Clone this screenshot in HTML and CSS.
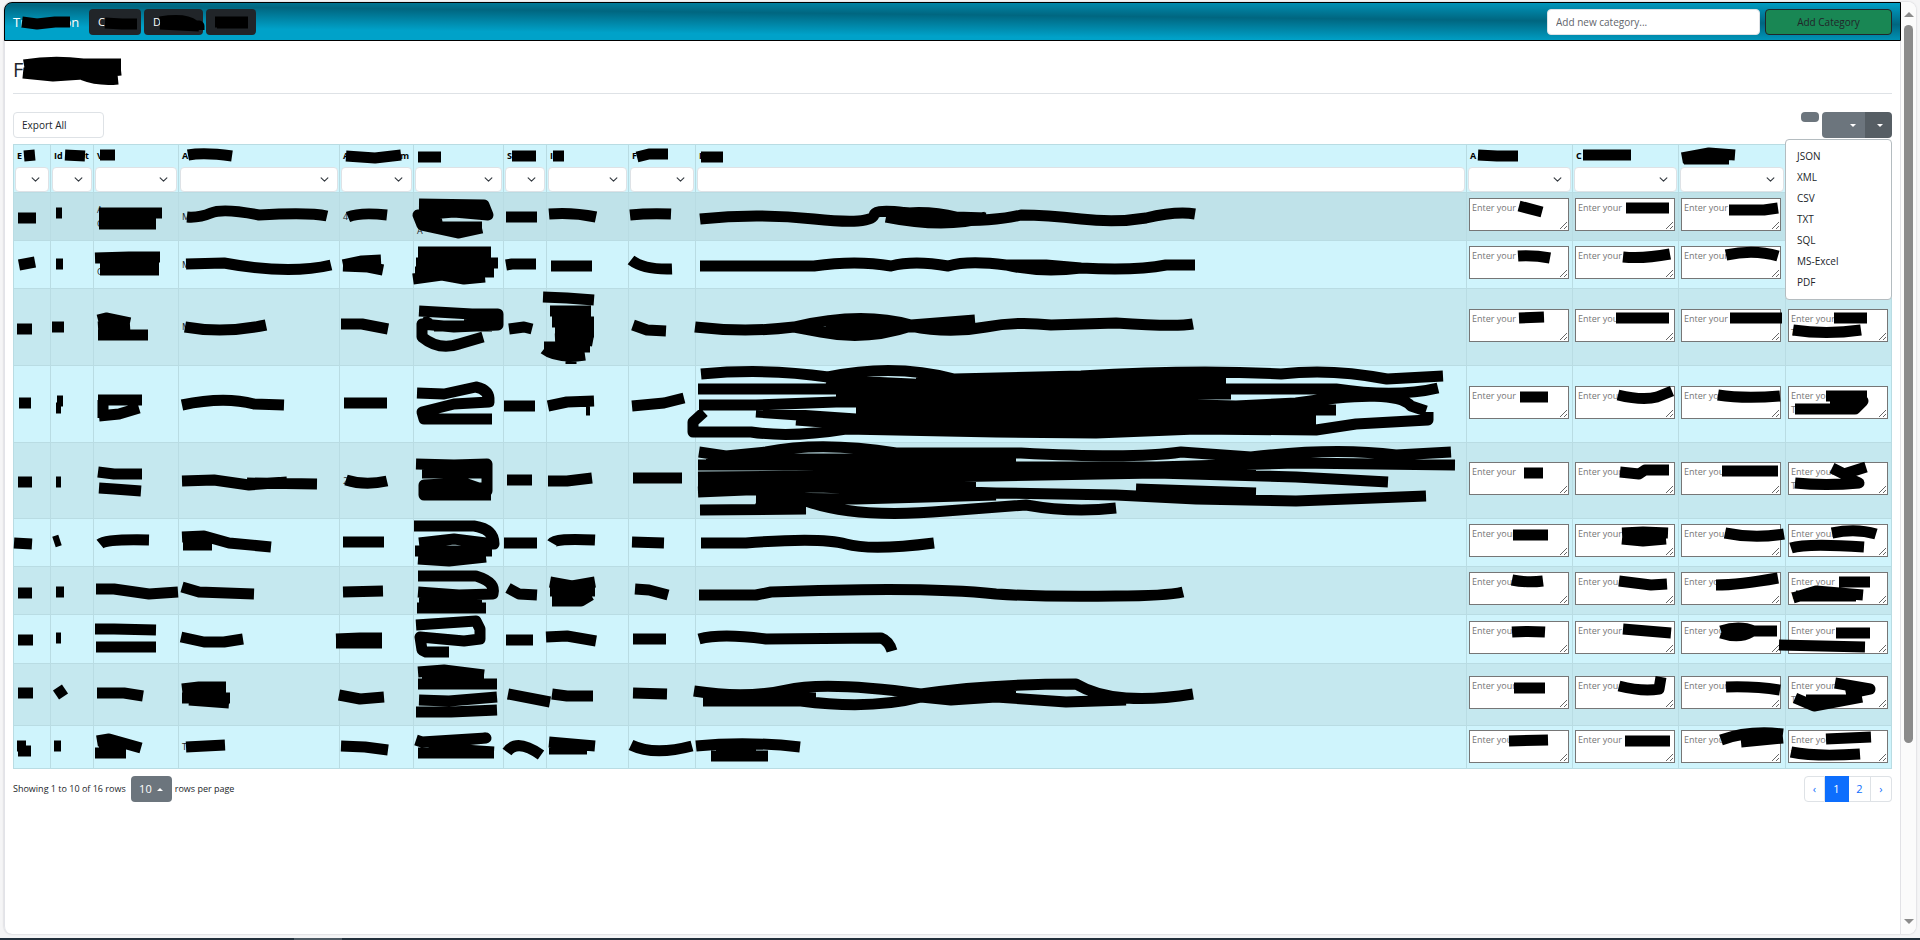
FILE: index.html
```html
<!DOCTYPE html>
<html lang="en">
<head>
<meta charset="utf-8">
<title>Categories</title>
<link rel="stylesheet" href="styles.css">
</head>
<body>
<div class="window">
  <div class="page">
    <header class="navbar">
      <a class="brand" href="#">Tr<span class="redacted redacted-brand"><svg class="ink"><path d="M-3 10L12 12L30 10H45"/></svg></span>on</a>
      <nav class="nav-buttons">
        <button class="btn btn-dark nav-c" type="button">C<svg class="ink"><path d="M15 13L32 14H47"/></svg></button>
        <button class="btn btn-dark nav-d" type="button">D<svg class="ink"><path d="M15 12Q40 8 49 15M15 14L54 16V20"/></svg></button>
        <button class="btn btn-dark nav-t" type="button" aria-label="Menu"><svg class="ink"><path d="M8 12H41M10 13H41"/></svg></button>
      </nav>
      <form class="add-form">
        <input class="field" type="text" placeholder="Add new category..." aria-label="New category">
        <button class="btn btn-success" type="button">Add Category</button>
      </form>
    </header>
    <main class="content">
      <h1 class="title">F<svg class="ink"><path d="M11 6Q40 1 70 5H108M10 14L40 17L70 15L108 11M12 11H108M70 16Q85 22 105 20"/></svg></h1>
      <div class="toolbar">
        <select class="field export-scope" aria-label="Export scope"><option>Export All</option></select>
        <div class="tools">
          <button class="pill" type="button" aria-label="Toggle view"></button>
          <div class="btn-group">
            <button class="btn btn-secondary columns" type="button" aria-label="Columns"><span class="caret"></span></button>
            <button class="btn btn-secondary export" type="button" aria-label="Export" aria-expanded="true"><span class="caret"></span></button>
            <div class="menu">
              <a href="#">JSON</a><a href="#">XML</a><a href="#">CSV</a><a href="#">TXT</a><a href="#">SQL</a><a href="#">MS-Excel</a><a href="#">PDF</a>
            </div>
          </div>
        </div>
      </div>
      <table class="grid">
        <colgroup>
          <col class="w37"><col class="w43"><col class="w85"><col class="w161"><col class="w74"><col class="w90"><col class="w43"><col class="w82"><col class="w67"><col><col class="w106"><col class="w106"><col class="w107"><col class="w106">
        </colgroup>
        <thead><tr id="head"></tr></thead>
        <tbody id="rows"></tbody>
      </table>
      <footer class="footer">
        <div class="info">
          <span>Showing 1 to 10 of 16 rows</span>
          <button class="btn btn-secondary size" type="button">10<span class="caret caret-up"></span></button>
          <span>rows per page</span>
        </div>
        <nav class="pages" aria-label="Pages">
          <a class="step" href="#">‹</a><a class="active" href="#">1</a><a href="#">2</a><a class="step" href="#">›</a>
        </nav>
      </footer>
    </main>
  </div>
  <div class="scrollbar">
    <span class="arrow arrow-up"></span>
    <div class="track"><div class="thumb"></div></div>
    <span class="arrow arrow-down"></span>
  </div>
</div>
<div class="taskbar"><span></span></div>
<script src="table.js"></script>
</body>
</html>
```
FILE: styles.css
```css
* { box-sizing: border-box; }
body {
  margin: 0;
  height: 100vh;
  display: flex;
  flex-direction: column;
  background: #f5f5f6;
  color: #212529;
  font: 10px/16px "Open Sans", "Noto Sans", sans-serif;
  overflow: hidden;
}
button, input, select, textarea { font: inherit; color: inherit; margin: 0; }
a { text-decoration: none; color: inherit; }

.window {
  flex: 1;
  display: flex;
  margin: 2px 4px 4px;
  background: #fff;
  border-radius: 8px;
  box-shadow: 0 0 2px #b9bbc0;
}
.page {
  flex: 1;
  min-width: 0;
  border-left: 1px solid #e2e3e8;
  border-right: 1px solid #e2e2e6;
  border-radius: 8px 0 0 8px;
}
.ink {
  position: absolute;
  top: 0;
  left: 0;
  z-index: 1;
  width: 1px;
  height: 1px;
  overflow: visible;
  pointer-events: none;
}
.ink path { fill: none; stroke: #000; stroke-width: 11px; stroke-linejoin: round; }

.navbar {
  display: flex;
  align-items: center;
  height: 39px;
  margin: 0 -1px;
  padding: 0 8px;
  border: 1px solid #000;
  border-radius: 8px 0 0 0;
  background: linear-gradient(180.6deg, #009fc7 0%, #006680 38%, #00a2c9 76%, #00a2c9 100%);
}
.brand { color: #fff; font-size: 13px; line-height: 20px; width: 76px; white-space: nowrap; }
.redacted { position: relative; display: inline-block; height: 20px; vertical-align: top; }
.redacted-brand { width: 38px; }
.nav-buttons { display: flex; gap: 3px; }
.btn {
  position: relative;
  height: 26px;
  padding: 0 8px;
  border: 1px solid transparent;
  border-radius: 4px;
  text-align: left;
}
.btn-dark { background: #212529; color: #fff; font-size: 11px; }
.nav-c { width: 52px; }
.nav-d { width: 59px; }
.nav-t { width: 50px; }
.add-form { display: flex; gap: 5px; margin-left: auto; }
.field {
  height: 26px;
  width: 213px;
  padding: 0 8px;
  border: 1px solid #dee2e6;
  border-radius: 4px;
  background: #fff;
}
.field::placeholder { color: #5f656b; opacity: 1; }
.btn-success { width: 127px; text-align: center; background: #198754; border-color: #212529; }

.content { padding: 0 8px; }
.title {
  position: relative;
  margin: 0;
  padding: 16px 0 11px;
  border-bottom: 1px solid #dee2e6;
  font-size: 20px;
  line-height: 25px;
  font-weight: 400;
}
.title .ink { top: 18px; }
.toolbar { display: flex; justify-content: space-between; margin: 18px 0 6px; }
.export-scope { width: 91px; appearance: none; }
.tools { display: flex; align-items: flex-start; gap: 3px; }
.pill { width: 18px; height: 10px; padding: 0; border: 0; border-radius: 4px; background: #6c757d; }
.btn-group { position: relative; display: flex; }
.btn-secondary {
  display: flex;
  align-items: center;
  justify-content: flex-end;
  gap: 5px;
  background: #6c757d;
  color: #fff;
}
.columns { width: 43px; border-radius: 4px 0 0 4px; }
.export { width: 27px; border-radius: 0 4px 4px 0; background: #565e64; }
.caret { border: 3px solid transparent; border-top-color: #fff; border-bottom: 0; }
.caret-up { border-top: 0; border-bottom: 3px solid #fff; }
.menu {
  position: absolute;
  top: 27px;
  right: 0;
  z-index: 5;
  width: 107px;
  padding: 6px 0;
  border: 1px solid #b4bcc0;
  border-radius: 4px;
  background: #fff;
}
.menu a { display: block; padding: 0 11px; line-height: 21px; }

.grid {
  width: 100%;
  table-layout: fixed;
  border-collapse: collapse;
  font-size: 9px;
  line-height: 14px;
}
.w37 { width: 37px; }
.w43 { width: 43px; }
.w67 { width: 67px; }
.w74 { width: 74px; }
.w82 { width: 82px; }
.w85 { width: 85px; }
.w90 { width: 90px; }
.w106 { width: 106px; }
.w107 { width: 107px; }
.w161 { width: 161px; }
.grid th, .grid td {
  position: relative;
  padding: 0 3px;
  border: 1px solid #b9dce3;
  background: #cff4fc;
  text-align: left;
  white-space: pre-line;
}
.grid th { padding: 0 1px; color: #000; }
.grid tbody tr:nth-child(odd) td { background: #c5e8ef; }
.grid tbody tr:first-child td { background: #bfe2e9; }
.label { display: flex; height: 22px; padding: 0 10px 0 2px; justify-content: space-between; align-items: center; }
.label.spread { padding-right: 3px; }
.filter {
  display: block;
  width: 100%;
  height: 25px;
  border: 1px solid #dee2e6;
  border-radius: 4px;
  background-color: #fff;
}
select.filter {
  appearance: none;
  background-image: url("data:image/svg+xml,%3Csvg xmlns='http://www.w3.org/2000/svg' viewBox='0 0 16 16'%3E%3Cpath fill='none' stroke='%23343a40' stroke-linecap='round' stroke-linejoin='round' stroke-width='2' d='m2 5 6 6 6-6'/%3E%3C/svg%3E");
  background-repeat: no-repeat;
  background-position: right 8px center;
  background-size: 9px 9px;
}
.h43 { height: 43px; }
.h48 { height: 48px; }
.h49 { height: 49px; }
.h62 { height: 62px; }
.h76 { height: 76px; }
.h77 { height: 77px; }
.note {
  display: block;
  width: 100px;
  height: 33px;
  margin-bottom: 4px;
  padding: 2px;
  border: 1px solid #767676;
  border-radius: 0;
  background: #fff;
  overflow: hidden;
}
.h43 .note { margin-bottom: 2px; }
.grid .note-cell { padding: 0 2px; }

.footer { display: flex; justify-content: space-between; margin-top: 7px; }
.info { display: flex; align-items: center; font-size: 9px; }
.size { width: 41px; margin: 0 3px 0 5px; font-size: 11px; }
.pages { display: flex; color: #0d6efd; font-size: 11px; }
.pages a {
  width: 22px;
  height: 26px;
  border: 1px solid #dee2e6;
  border-left-width: 0;
  line-height: 24px;
  text-align: center;
}
.pages .step { width: 21px; }
.pages a:first-child { border-left-width: 1px; border-radius: 4px 0 0 4px; }
.pages a:last-child { border-radius: 0 4px 4px 0; }
.pages .active { width: 24px; background: #0d6efd; border-color: #0d6efd; color: #fff; }

.scrollbar {
  width: 15px;
  display: flex;
  flex-direction: column;
  align-items: center;
  padding: 10px 0;
  background: #fbfbfb;
  border-radius: 0 8px 8px 0;
}
.arrow { border: 5px solid transparent; }
.arrow-up { border-top: 0; border-bottom-color: #8b8b8b; }
.arrow-down { border-bottom: 0; border-top-color: #8b8b8b; }
.track { flex: 1; padding: 8px 0; }
.thumb { width: 9px; height: 81%; border-radius: 5px; background: #8b8b8b; }
.taskbar { height: 2px; padding-left: 294px; background: #22303c; }
.taskbar span { display: block; width: 48px; height: 2px; background: #4d5a64; }
```
FILE: table.js
```javascript
// Header cells: visible text (start, end) and the marker strokes over the rest.
const head = [
  ["E", "", "M10 11L21 10"],
  ["Id", "t", "M14 10L34 11"],
  ["V", "", "M6 10h15"],
  ["A", "", "M9 10Q25 7 53 11"],
  ["A", "m", "M6 11L35 13L61 10"],
  ["", "", "M4 12h23"],
  ["S", "", "M8 11h24"],
  ["I", "", "M6 11h11"],
  ["F", "", "M8 12L20 9H39"],
  ["I", "", "M5 12h22"],
  ["A", "", "M11 10L30 11H51"],
  ["C", "", "M10 10h48"],
  ["", "", "M3 13L30 8L56 10M5 14H50"],
  ["", "", ""]
];

// Body rows: height class, visible text by column, marker strokes per column.
const rows = [
  ["h48", {2: "A\nC", 3: "M", 4: "4", 5: "\n\nA"}, [
    "M4 25h18", "M5 20h6", "M5 20h63M5 31h57", "M8 24Q20 25 32 20T80 22Q130 19 148 23", "M8 24Q20 19 47 22",
    "M5 11L70 12L74 22L40 19L4 22L8 32L45 40L68 35M5 24L22 24L24 34H68M30 14H70", "M2 24h31", "M2 21Q25 19 49 24", "M1 22Q20 20 42 21",
    "M4 26Q60 20 118 26T178 22T255 28Q300 28 325 22Q350 22 385 26T450 25Q480 18 499 21M190 22Q230 16 260 24L290 25M190 24Q250 36 290 24",
    "M52 13L75 19", "M53 15h43", "M50 17L85 17L99 15", ""]],
  ["h48", {2: "\nC", 3: "M"}, [
    "M5 24L21 21", "M5 23h7", "M1 17L35 16H66M6 29h59M6 24H65", "M7 23L45 22Q110 34 152 24", "M3 24L22 20L41 19M3 25L28 26L43 29",
    "M4 11H77M2 22H84M1 31H80M-1 38L28 34L50 38L71 36", "M2 24L8 23H32", "M4 25h41", "M2 19Q15 29 43 28",
    "M4 25H118Q160 19 195 25Q218 19 252 25Q272 19 310 24Q345 32 385 27Q440 30 470 24L499 24M310 24H350L385 27",
    "M51 15Q67 14 83 17", "M50 16Q70 18 97 13", "M47 14Q75 8 99 15", ""]],
  ["h77", {3: "M"}, [
    "M3 40h15", "M1 38h12", "M4 31L12 29L36 34M4 38L36 36M4 46H54", "M6 38Q45 45 87 36", "M1 35L22 35L48 40",
    "M5 22L58 25L84 25V36L40 38L8 35L8 48Q25 62 45 55L69 48M8 31L16 35M50 30H80M20 37H78", "M5 40L20 38L28 40",
    "M-4 8L20 9L47 11M3 22H44M5 33H47M8 43H47M8 50L30 49L46 52M-3 60Q10 70 38 66M-3 58H43M24 66V75", "M4 36L18 41L37 42",
    "M-1 38Q50 44 98 38Q165 22 215 36L279 31M98 38L125 43Q170 52 215 37Q252 45 290 38Q320 32 355 36L420 34Q480 38 497 35M130 38H270",
    "M52 29L77 28", "M43 29h53", "M51 29h52", "M48 29h33M7 41Q40 46 75 41"]],
  ["h77", {}, [
    "M5 37h12", "M6 35h6M5 42h5", "M4 34L25 34H48M5 34H9M9 34V52M5 50L25 48L45 42", "M3 39Q45 30 75 38L105 39", "M4 37h43",
    "M3 27L30 28L62 21Q76 24 75 36L40 38L8 46L10 53H78", "M0 40h31", "M1 40L20 36L47 35M39 44h4", "M3 40L35 37L55 32",
    "M5 8Q70 2 132 11Q198 -3 258 13L385 10Q500 3 585 8Q635 2 691 13L747 10M2 23H240L400 22L520 23L640 23Q700 32 742 22M3 39L60 39L140 36L300 34L540 40L600 37Q700 22 715 40L730 45M8 46L-3 56V66L55 66Q95 72 150 63L300 66L400 67L500 63L620 64L660 58L732 54V46M130 14L258 20M60 46L160 53H620M100 54L180 60H600M160 44H640M140 28H535M220 16H530",
    "M53 31h28", "M45 29Q70 35 84 31L99 25", "M39 29Q65 33 101 30", "M40 30h41M9 43h60l8-8L44 35"]],
  ["h76", {4: "2"}, [
    "M4 39h14", "M5 39h5", "M4 29L20 31H48M5 45L20 46L47 48", "M3 38L35 37L70 42L108 39M68 40L138 41", "M6 37Q25 43 47 38",
    "M2 21L40 22L73 21V48L50 40L10 42V52H77M8 30H76M25 45H70", "M3 37h25", "M1 38L20 38L45 35", "M4 35h49",
    "M3 9L30 13L70 9Q125 -2 200 10L325 10Q440 16 485 9L555 14Q640 4 700 12L755 9M2 22L100 22L260 24L460 24L600 20L759 22M2 34L110 33L240 34L460 30L600 34L692 39M2 49L120 44L300 50L420 52L500 56L600 58L730 53M4 67L110 66M60 66L110 58Q160 76 250 68L330 62Q375 70 420 65M2 43L230 42M10 16H320M200 18H260M330 26H560M60 55L160 56L300 52M120 42L280 42M440 46L560 50",
    "M57 30h19", "M47 29L66 31L72 27L96 27", "M43 28h56", "M46 25L58 31L80 24M9 40Q40 43 73 40L60 34"]],
  ["h48", {}, [
    "M0 24L18 25", "M3 23L9 21", "M6 25Q12 20 55 21", "M3 18L25 17L50 24L92 28M4 26H33", "M3 23h41",
    "M0 7L60 7Q80 10 80 25L40 20L5 24M1 32H78M4 40L35 42L72 38", "M0 24h33", "M5 24Q8 19 48 21", "M3 23L35 24",
    "M5 24L50 24Q125 18 150 25T238 24", "M46 16h35", "M49 14L70 13L95 14M49 20L70 22L93 20", "M46 14Q75 20 105 15", "M46 14Q70 9 90 15M5 29Q20 24 78 28"]],
  ["h48", {}, [
    "M4 26h14", "M5 25h8", "M2 22L20 22L55 27L84 25", "M3 20L20 25L75 27", "M3 25L43 24",
    "M4 9H62Q82 15 79 27L45 28L4 25M5 33H68M3 41H72", "M4 21L15 27L33 28", "M3 15L25 19L48 15M3 24H48M5 34H34L44 28", "M6 22L20 23L39 28",
    "M3 28L60 28L75 25Q230 19 300 27Q345 30 420 29Q470 29 487 25", "M45 13Q60 16 76 14", "M46 14L78 18L94 17", "M37 18Q60 18 99 11", "M53 15h31M7 31L30 24L77 28M10 29H70"]],
  ["h49", {}, [
    "M4 25h15", "M5 23h5", "M1 14L20 14L62 15M2 32H62", "M2 22L25 27L45 27L64 24", "M-4 24L20 23L42 23M-4 28H42",
    "M2 10L62 6L66 14V24L50 26L6 22L8 35L12 37H35", "M2 25h27", "M-1 22L20 21L49 26", "M4 24h33",
    "M3 24Q25 18 70 24L185 23Q193 26 196 36", "M45 17Q60 16 78 17", "M50 14L98 18", "M42 16Q60 10 75 16L98 16M42 18Q60 24 72 17", "M50 18h34M-7 30L79 32"]],
  ["h62", {}, [
    "M4 29h15", "M5 31L14 25", "M3 29H30L49 32", "M3 25L20 23H47M3 34H51M10 36L50 39", "M-1 31L20 35L44 33",
    "M4 8L30 6L70 11M4 20H83M5 36L35 37L83 33M2 48H37L83 46M8 14H70", "M4 30L46 38", "M5 30L20 32L46 32", "M4 29L38 30",
    "M-2 27Q50 35 90 26T225 30Q290 20 380 20Q400 32 430 34T497 30M7 37L105 37Q175 46 225 33L255 36L300 33L370 38L430 36M240 31H320M20 34H120",
    "M47 24h31", "M46 22Q70 28 86 25L88 13", "M47 23Q75 22 101 26", "M49 19L84 25L60 30M9 34L28 42L76 33M20 36H60"]],
  ["h43", {3: "T"}, [
    "M3 20L12 20M4 25H17", "M3 20h7", "M3 15L15 13L47 22M1 27H32M5 19H32", "M7 21L46 19", "M1 20L25 21L48 24",
    "M2 14L8 16L72 12L50 14L20 22L80 26M4 27H80", "M3 26Q13 12 37 29", "M2 16L48 20M2 23H40", "M2 19Q25 30 63 20",
    "M0 20Q50 15 104 21M15 30H72M20 24H60", "M42 15L81 14", "M52 15h45", "M42 14Q70 4 104 8M62 16L104 12", "M40 13L85 11M5 26Q30 31 74 28"]]
];

const ink = d => d ? `<svg class="ink"><path d="${d}"/></svg>` : "";

document.getElementById("head").innerHTML = head.map(([start, end, d], i) => {
  const control = i === 9
    ? `<input class="filter" type="text" aria-label="Filter column ${i + 1}">`
    : `<select class="filter" aria-label="Filter column ${i + 1}"><option></option></select>`;
  return `<th><div class="label${end ? " spread" : ""}"><span>${start}</span><span>${end}</span></div>${control}${ink(d)}</th>`;
}).join("");

document.getElementById("rows").innerHTML = rows.map(([size, text, marks], r) =>
  `<tr class="${size}">` + marks.map((d, c) => c < 10
    ? `<td>${text[c] || ""}${ink(d)}</td>`
    : `<td class="note-cell"><textarea class="note" aria-label="Row ${r + 1}, column ${c + 1}" placeholder="Enter your${c === 13 ? "&#10;T" : ""}"></textarea>${ink(d)}</td>`
  ).join("") + "</tr>").join("");
```
